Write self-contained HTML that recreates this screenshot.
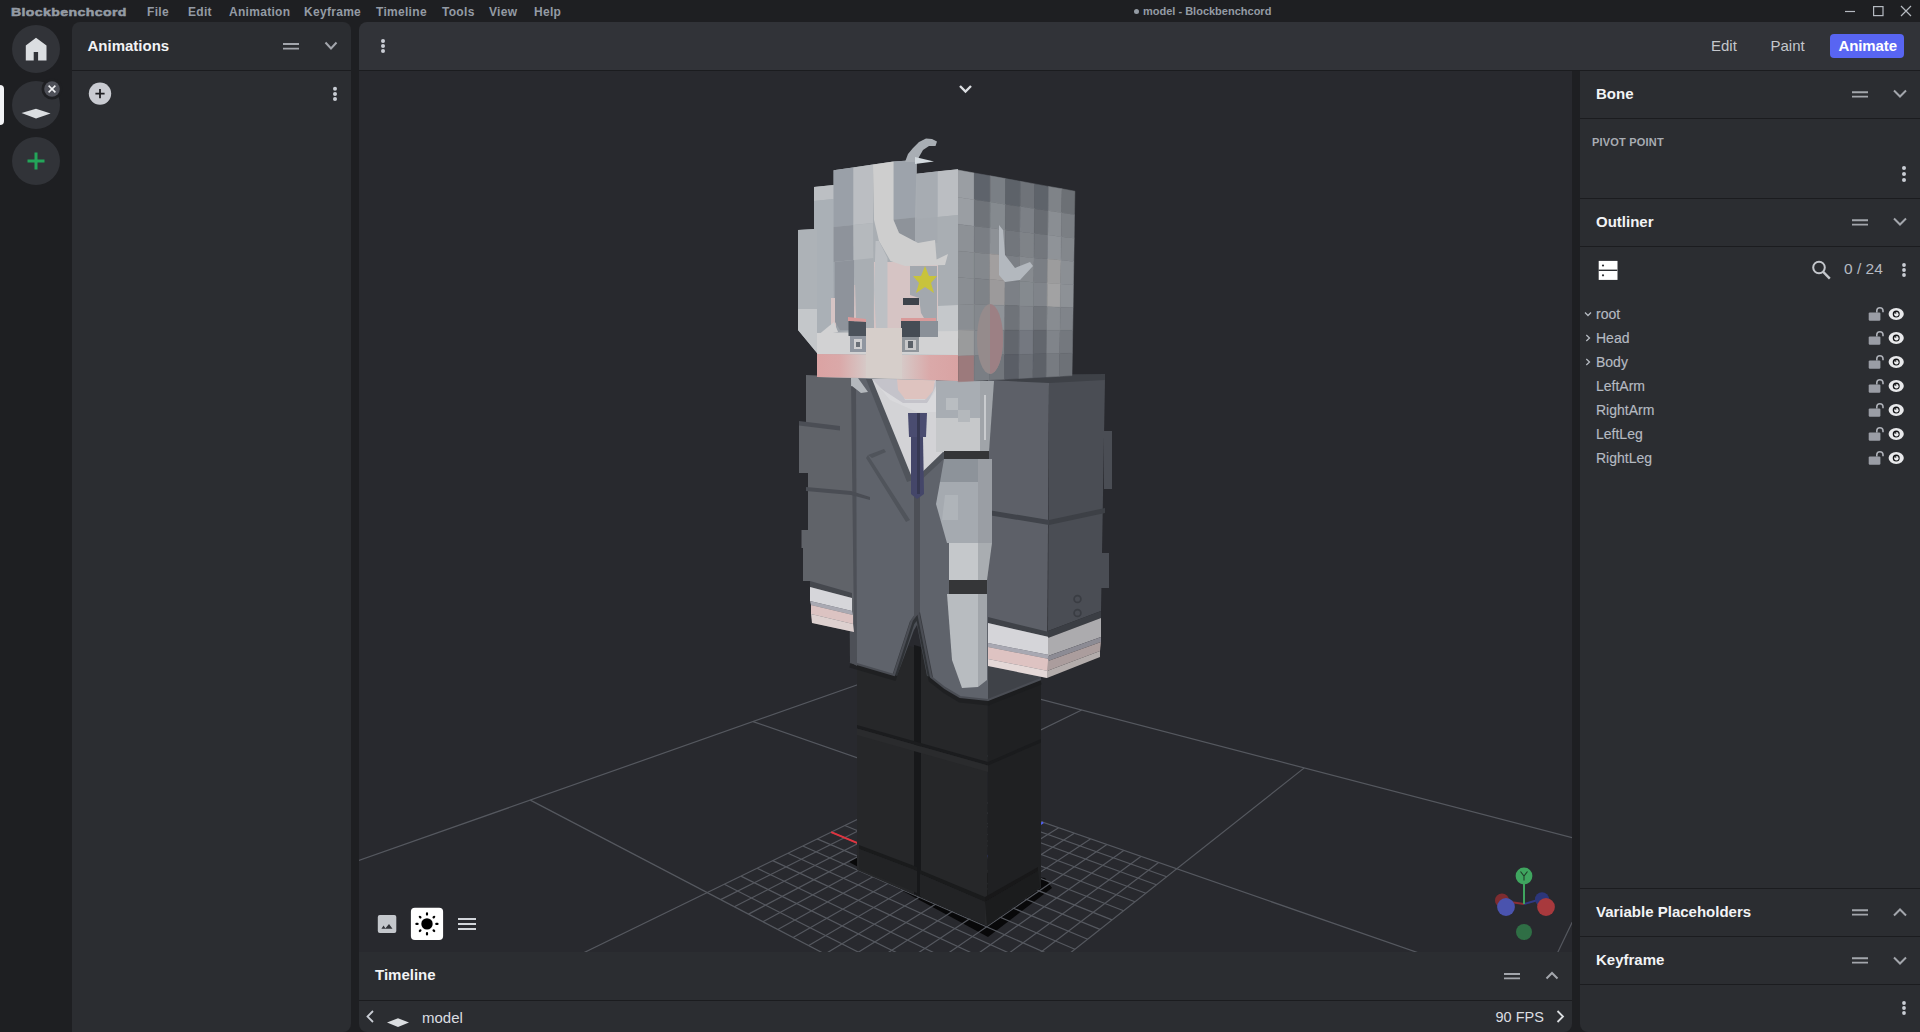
<!DOCTYPE html>
<html><head><meta charset="utf-8">
<style>
*{margin:0;padding:0;box-sizing:border-box}
html,body{width:1920px;height:1032px;overflow:hidden;background:#1e1f22;font-family:"Liberation Sans",sans-serif}
.a{position:absolute;white-space:nowrap}
.menu{top:6px;font-size:12px;line-height:12px;font-weight:bold;color:#949ba4;letter-spacing:0.3px}
.panel{background:#2b2d31}
.ht{font-size:15px;line-height:15px;font-weight:bold;color:#f2f3f5}
.hline{height:1px;background:#1b1c1f}
.olt{font-size:14px;line-height:14px;color:#b5bac1;-webkit-text-stroke:0.15px #b5bac1}
svg{overflow:visible}
</style></head><body>
<!-- title bar -->
<div class="a menu" style="left:10.5px;top:6.8px;font-size:11.2px;line-height:11px;letter-spacing:0.3px;transform:scaleX(1.26);transform-origin:0 0;-webkit-text-stroke:0.5px #949ba4">Blockbenchcord</div>
<div class="a menu" style="left:147px">File</div>
<div class="a menu" style="left:188px">Edit</div>
<div class="a menu" style="left:229px">Animation</div>
<div class="a menu" style="left:304px">Keyframe</div>
<div class="a menu" style="left:376px">Timeline</div>
<div class="a menu" style="left:442px">Tools</div>
<div class="a menu" style="left:489px">View</div>
<div class="a menu" style="left:534px">Help</div>
<div class="a" style="left:1134px;top:9px;width:5px;height:5px;border-radius:50%;background:#949ba4"></div>
<div class="a menu" style="left:1143px;top:5.5px;font-size:11px;line-height:11px;letter-spacing:0">model - Blockbenchcord</div>
<svg class="a" style="left:0;top:0" width="1920" height="22">
<line x1="1845" y1="11.5" x2="1855" y2="11.5" stroke="#b5bac1" stroke-width="1.2"/>
<rect x="1873.6" y="6.6" width="9.4" height="9" fill="none" stroke="#b5bac1" stroke-width="1.2"/>
<path d="M1901 6 L1911 16 M1911 6 L1901 16" stroke="#b5bac1" stroke-width="1.2"/>
</svg>

<!-- left rail -->
<div class="a" style="left:12px;top:25px;width:48px;height:48px;border-radius:50%;background:#313338"></div>
<div class="a" style="left:12px;top:81px;width:48px;height:48px;border-radius:50%;background:#313338"></div>
<div class="a" style="left:12px;top:137px;width:48px;height:48px;border-radius:50%;background:#313338"></div>
<div class="a" style="left:0;top:85px;width:4px;height:40px;border-radius:0 4px 4px 0;background:#f2f3f5"></div>
<svg class="a" style="left:0;top:0" width="72" height="200">
<path d="M36 37.8 L46.5 45.5 L46.5 60.5 L38.1 60.5 L38.1 52 L33.7 52 L33.7 60.5 L25.8 60.5 L25.8 45.5 Z" fill="#dbdee1"/>
<path d="M21.5 113 L36 108.7 L50.6 113.4 L36 118.6 Z" fill="#dbdee1"/>
<circle cx="52" cy="89" r="10.5" fill="#1e1f22"/>
<circle cx="52" cy="89" r="7.8" fill="#4e5058"/>
<path d="M48.6 85.6 L55.4 92.4 M55.4 85.6 L48.6 92.4" stroke="#f2f3f5" stroke-width="1.5"/>
<path d="M36 152.5 V169.5 M27.5 161 H44.5" stroke="#23a559" stroke-width="3"/>
</svg>

<!-- animations panel -->
<div class="a panel" style="left:72px;top:22px;width:279px;height:1010px;border-radius:8px 8px 8px 0"></div>
<div class="a hline" style="left:72px;top:70px;width:279px"></div>
<div class="a ht" style="left:87.5px;top:37.5px">Animations</div>
<svg class="a" style="left:0;top:0" width="360" height="120">
<path d="M283 44 H299 M283 48.6 H299" stroke="#a3a6ac" stroke-width="1.9"/>
<path d="M325.5 42.5 L331 48.5 L336.5 42.5" fill="none" stroke="#a3a6ac" stroke-width="2"/>
<circle cx="100" cy="93.6" r="11.2" fill="#c9cbd1"/>
<path d="M100 89 V98.2 M95.4 93.6 H104.6" stroke="#1e1f22" stroke-width="1.8"/>
<circle cx="335" cy="88.8" r="2" fill="#c9cdd4"/><circle cx="335" cy="93.9" r="2" fill="#c9cdd4"/><circle cx="335" cy="99" r="2" fill="#c9cdd4"/>
</svg>

<!-- center -->
<div class="a" style="left:359px;top:22px;width:1561px;height:48px;background:#313338;border-radius:8px 0 0 0"></div>
<div class="a" style="left:359px;top:70px;width:1561px;height:1px;background:#1b1c1f"></div>
<div class="a" style="left:359px;top:71px;width:1213px;height:881px;background:#28292e"></div>
<div class="a panel" style="left:359px;top:952px;width:1213px;height:80px;border-radius:0 0 8px 8px"></div>
<div class="a hline" style="left:359px;top:1000px;width:1213px"></div>
<div class="a ht" style="left:375px;top:967.4px">Timeline</div>
<div class="a" style="left:422px;top:1009.8px;font-size:15px;line-height:15px;color:#dbdee1">model</div>
<div class="a" style="left:1495.5px;top:1009.8px;font-size:14.5px;line-height:14.5px;color:#dbdee1">90 FPS</div>
<div class="a" style="left:1711px;top:38.4px;font-size:15px;line-height:15px;color:#c4c7cc">Edit</div>
<div class="a" style="left:1770.5px;top:38.4px;font-size:15px;line-height:15px;color:#c4c7cc">Paint</div>
<div class="a" style="left:1830px;top:34px;width:74px;height:24px;border-radius:4px;background:#5865f2"></div>
<div class="a" style="left:1838.5px;top:38.4px;font-size:15px;line-height:15px;font-weight:bold;color:#ffffff;letter-spacing:-0.1px">Animate</div>
<svg class="a" style="left:0;top:0" width="1920" height="1032">
<circle cx="383" cy="41" r="2" fill="#c9cdd4"/><circle cx="383" cy="46" r="2" fill="#c9cdd4"/><circle cx="383" cy="51" r="2" fill="#c9cdd4"/>
<!-- timeline icons -->
<path d="M1504 974 H1520 M1504 978.4 H1520" stroke="#a3a6ac" stroke-width="1.9"/>
<path d="M1546.5 978.5 L1552 973 L1557.5 978.5" fill="none" stroke="#a3a6ac" stroke-width="2"/>
<path d="M373 1011 L367.5 1016.5 L373 1022" fill="none" stroke="#c9cdd4" stroke-width="1.8"/>
<path d="M1557.5 1011 L1563 1016.5 L1557.5 1022" fill="none" stroke="#dbdee1" stroke-width="1.8"/>
<path d="M387 1022.5 L398 1018.3 L409 1022.5 L398 1027 Z" fill="#dbdee1"/>
</svg>

<svg class="a" style="left:0;top:0" width="1920" height="1032" viewBox="0 0 1920 1032"><defs><clipPath id="vp"><rect x="359" y="71" width="1213" height="881"/></clipPath></defs><g clip-path="url(#vp)">
<polygon points="849,862 988,937 1052,888 1045,878 857,856" fill="#080809"/>
<line x1="911.6" y1="665.7" x2="194.4" y2="918.5" stroke="#55585f" stroke-width="1.2" />
<line x1="911.6" y1="665.7" x2="1608.1" y2="847.0" stroke="#55585f" stroke-width="1.2" />
<line x1="1081.7" y1="710.0" x2="339.9" y2="1071.6" stroke="#55585f" stroke-width="1.2" />
<line x1="753.1" y1="721.6" x2="1537.7" y2="994.3" stroke="#55585f" stroke-width="1.2" />
<line x1="1304.3" y1="767.9" x2="588.8" y2="1333.6" stroke="#55585f" stroke-width="1.2" />
<line x1="530.3" y1="800.1" x2="1410.6" y2="1260.2" stroke="#55585f" stroke-width="1.2" />
<line x1="1608.1" y1="847.0" x2="1112.2" y2="1884.5" stroke="#55585f" stroke-width="1.2" />
<line x1="194.4" y1="918.5" x2="1112.2" y2="1884.5" stroke="#55585f" stroke-width="1.2" />
<line x1="944.0" y1="788.0" x2="720.6" y2="899.6" stroke="#55585f" stroke-width="1.2" />
<line x1="919.6" y1="789.0" x2="1166.7" y2="876.7" stroke="#55585f" stroke-width="1.2" />
<line x1="957.3" y1="792.6" x2="734.3" y2="906.8" stroke="#55585f" stroke-width="1.2" />
<line x1="907.9" y1="794.7" x2="1156.4" y2="884.8" stroke="#55585f" stroke-width="1.2" />
<line x1="970.9" y1="797.3" x2="748.5" y2="914.1" stroke="#55585f" stroke-width="1.2" />
<line x1="895.9" y1="800.5" x2="1145.8" y2="893.2" stroke="#55585f" stroke-width="1.2" />
<line x1="984.7" y1="802.1" x2="762.9" y2="921.7" stroke="#55585f" stroke-width="1.2" />
<line x1="883.7" y1="806.5" x2="1134.9" y2="901.8" stroke="#55585f" stroke-width="1.2" />
<line x1="998.9" y1="807.0" x2="777.8" y2="929.5" stroke="#55585f" stroke-width="1.2" />
<line x1="871.1" y1="812.7" x2="1123.6" y2="910.7" stroke="#55585f" stroke-width="1.2" />
<line x1="1013.3" y1="812.1" x2="793.1" y2="937.5" stroke="#55585f" stroke-width="1.2" />
<line x1="858.1" y1="819.0" x2="1112.0" y2="919.9" stroke="#55585f" stroke-width="1.2" />
<line x1="1028.1" y1="817.2" x2="808.7" y2="945.6" stroke="#55585f" stroke-width="1.2" />
<line x1="844.8" y1="825.5" x2="1100.0" y2="929.4" stroke="#55585f" stroke-width="1.2" />
<line x1="1043.2" y1="822.4" x2="824.9" y2="954.1" stroke="#55585f" stroke-width="1.2" />
<line x1="831.2" y1="832.1" x2="1087.7" y2="939.2" stroke="#55585f" stroke-width="1.2" />
<line x1="1058.6" y1="827.8" x2="841.4" y2="962.7" stroke="#55585f" stroke-width="1.2" />
<line x1="817.2" y1="838.9" x2="1074.9" y2="949.3" stroke="#55585f" stroke-width="1.2" />
<line x1="1074.3" y1="833.3" x2="858.5" y2="971.6" stroke="#55585f" stroke-width="1.2" />
<line x1="802.8" y1="846.0" x2="1061.6" y2="959.8" stroke="#55585f" stroke-width="1.2" />
<line x1="1090.4" y1="838.9" x2="876.0" y2="980.8" stroke="#55585f" stroke-width="1.2" />
<line x1="788.0" y1="853.2" x2="1047.9" y2="970.6" stroke="#55585f" stroke-width="1.2" />
<line x1="1106.9" y1="844.6" x2="894.0" y2="990.2" stroke="#55585f" stroke-width="1.2" />
<line x1="772.7" y1="860.6" x2="1033.8" y2="981.8" stroke="#55585f" stroke-width="1.2" />
<line x1="1123.7" y1="850.4" x2="912.6" y2="999.9" stroke="#55585f" stroke-width="1.2" />
<line x1="757.1" y1="868.2" x2="1019.1" y2="993.4" stroke="#55585f" stroke-width="1.2" />
<line x1="1140.9" y1="856.4" x2="931.7" y2="1009.9" stroke="#55585f" stroke-width="1.2" />
<line x1="740.9" y1="876.1" x2="1003.9" y2="1005.4" stroke="#55585f" stroke-width="1.2" />
<line x1="1158.6" y1="862.6" x2="951.4" y2="1020.2" stroke="#55585f" stroke-width="1.2" />
<line x1="724.3" y1="884.2" x2="988.1" y2="1017.9" stroke="#55585f" stroke-width="1.2" />
<line x1="947.0" y1="880.4" x2="831.2" y2="832.1" stroke="#e0343f" stroke-width="2" />
<line x1="947.0" y1="880.4" x2="1043.2" y2="822.4" stroke="#4f5ff0" stroke-width="2" />
<polygon points="857.0,633.0 988.0,666.0 987.0,926.0 857.0,870.0" fill="#262729" />
<polygon points="988.0,666.0 1041.0,645.0 1041.0,888.0 987.0,926.0" fill="#1f2022" />
<polygon points="914.0,645.0 921.0,647.0 921.0,897.0 914.0,894.0" fill="#17181a" />
<polygon points="857.0,725.0 988.0,762.0 988.0,765.5 857.0,728.5" fill="#1b1c1e" />
<polygon points="988.0,762.0 1041.0,739.0 1041.0,742.5 988.0,765.5" fill="#1a1b1d" />
<polygon points="857.0,728.5 988.0,765.5 988.0,772.0 857.0,735.0" fill="#2a2b2d" />
<polygon points="859.0,845.0 917.0,867.0 917.0,871.0 859.0,849.0" fill="#1a1b1c" />
<polygon points="920.0,870.0 985.0,897.0 985.0,902.0 920.0,874.0" fill="#1a1b1c" />
<polygon points="985.0,897.0 1038.0,867.0 1038.0,871.0 985.0,902.0" fill="#181819" />
<polygon points="859.0,849.0 917.0,871.0 917.0,893.0 859.0,869.0" fill="#222325" />
<polygon points="920.0,874.0 985.0,902.0 985.0,925.0 920.0,896.0" fill="#222325" />
<polygon points="985.0,902.0 1038.0,871.0 1040.0,887.0 987.0,925.0" fill="#1b1c1d" />
<polygon points="987.0,640.0 1041.0,618.0 1041.0,679.0 987.0,701.0" fill="#3f4248" />
<polygon points="849.0,377.0 988.0,381.0 988.0,700.0 960.0,697.0 945.0,688.0 931.0,677.0 918.0,612.0 912.0,620.0 894.0,675.0 850.0,662.0" fill="#5f636b" />
<polygon points="912.0,620.0 918.0,612.0 931.0,677.0 927.0,676.0 917.0,625.0 914.0,630.0 897.0,676.0 894.0,675.0" fill="#4b4f56" />
<polyline points="850,662 894,675 912,620 918,612 931,677 945,688 960,697 988,700 1041,679" fill="none" stroke="#1a1b1d" stroke-width="5" stroke-opacity="0.55" transform="translate(0,3)"/>
<polyline points="850,662 894,675 912,620 918,612 931,677 945,688 960,697 988,700 1041,679" fill="none" stroke="#4a4d54" stroke-width="2.2"/>
<polygon points="914.0,478.0 920.0,478.0 920.0,612.0 914.0,618.0" fill="#4c4f56" />
<polygon points="849.0,377.0 856.0,377.0 857.0,666.0 850.0,662.0" fill="#4d5057" />
<polygon points="870.0,379.0 936.0,380.0 943.0,454.0 917.0,479.0 912.0,479.0" fill="#d3d3d6" />
<polygon points="872.0,379.0 897.0,379.0 905.0,400.0 925.0,400.0 936.0,380.0 936.0,386.0 927.0,404.0 905.0,405.0 885.0,392.0" fill="#c4c3ca" />
<polygon points="880.0,388.0 903.0,403.0 927.0,403.0 936.0,390.0 936.0,412.0 917.0,412.0 890.0,400.0" fill="#d9d9dc" />
<polygon points="843.0,378.0 858.0,378.0 868.0,392.0 861.0,393.0 852.0,386.0 846.0,388.0" fill="#b4b8bd" />
<polygon points="897.0,379.0 935.0,380.0 933.0,391.0 926.0,399.0 905.0,399.0 898.0,390.0" fill="#dec3bf" />
<polygon points="866.0,379.0 872.0,379.0 913.0,480.0 907.0,482.0" fill="#50545b" />
<polygon points="943.0,452.0 947.0,456.0 919.0,482.0 915.0,479.0" fill="#50545b" />
<polygon points="868.0,455.0 884.0,449.0 886.0,452.0 872.0,458.0" fill="#50545b" />
<polygon points="868.0,455.0 910.0,520.0 906.0,522.0 866.0,458.0" fill="#50545b" />
<polygon points="908.0,413.0 927.0,413.0 926.0,437.0 909.0,437.0" fill="#4a4c70" />
<polygon points="911.0,437.0 923.0,437.0 924.0,494.0 917.0,499.0 911.0,494.0" fill="#444669" />
<polygon points="917.0,413.0 920.0,413.0 920.0,494.0 917.0,494.0" fill="#363852" />
<polygon points="806.0,375.0 851.0,377.0 854.0,632.0 813.0,623.0 810.0,581.0 803.0,581.0 803.0,548.0 801.5,548.0 801.5,530.0 808.0,530.0 808.0,473.0 799.0,473.0 799.0,422.0 806.0,422.0" fill="#606369" />
<polygon points="806.0,487.0 851.0,491.0 870.0,497.0 870.0,500.0 851.0,495.0 806.0,491.0" fill="#4a4d54" />
<polygon points="799.0,421.0 840.0,426.0 840.0,430.5 799.0,425.5" fill="#4b4e55" />
<polygon points="810.0,581.0 852.0,593.0 852.0,598.0 810.0,587.0" fill="#45484e" />
<polygon points="810.0,587.0 852.0,598.0 852.0,611.0 810.0,601.0" fill="#d6d6da" />
<polygon points="810.0,601.0 852.0,611.0 853.0,615.0 811.0,605.0" fill="#a9a9b2" />
<polygon points="811.0,605.0 853.0,615.0 853.0,624.0 811.0,614.0" fill="#dcc3c2" />
<polygon points="811.0,614.0 853.0,624.0 854.0,632.0 812.0,623.0" fill="#ddd0cf" />
<polygon points="988.0,379.0 1049.0,381.0 1047.0,678.0 988.0,666.0" fill="#5d6068" />
<polygon points="1049.0,381.0 1105.0,379.0 1101.0,611.0 1048.0,631.0" fill="#4a4d54" />
<polygon points="1104.0,431.0 1112.0,431.0 1112.0,489.0 1104.0,489.0" fill="#4a4d54" />
<polygon points="1100.0,553.0 1109.0,553.0 1109.0,588.0 1100.0,588.0" fill="#4a4d54" />
<polygon points="988.0,375.0 1105.0,374.0 1105.0,380.0 1049.0,383.0 988.0,380.0" fill="#3e4147" />
<polygon points="988.0,510.0 1049.0,520.0 1049.0,525.0 988.0,515.0" fill="#40434a" />
<polygon points="1049.0,520.0 1105.0,508.0 1105.0,513.0 1049.0,525.0" fill="#3d4046" />
<circle cx="1077.5" cy="599" r="3.4" fill="none" stroke="#3a3d43" stroke-width="1.7"/>
<circle cx="1077.5" cy="613" r="3.4" fill="none" stroke="#3a3d43" stroke-width="1.7"/>
<polygon points="988.0,617.0 1049.0,632.0 1049.0,637.0 988.0,623.0" fill="#3f4248" />
<polygon points="988.0,623.0 1049.0,637.0 1049.0,655.0 988.0,643.0" fill="#d5d5d9" />
<polygon points="988.0,643.0 1049.0,655.0 1049.0,659.0 988.0,647.0" fill="#a8a8b2" />
<polygon points="988.0,647.0 1049.0,659.0 1048.0,671.0 988.0,659.0" fill="#dec3c2" />
<polygon points="988.0,659.0 1048.0,671.0 1047.0,678.0 988.0,666.0" fill="#e4d8d7" />
<polygon points="1048.0,631.0 1101.0,611.0 1101.0,618.0 1048.0,638.0" fill="#3b3e44" />
<polygon points="1048.0,638.0 1101.0,618.0 1101.0,637.0 1048.0,656.0" fill="#acabae" />
<polygon points="1048.0,656.0 1101.0,637.0 1101.0,642.0 1048.0,661.0" fill="#8c8b94" />
<polygon points="1048.0,661.0 1101.0,642.0 1100.0,651.0 1047.0,671.0" fill="#ab9d9d" />
<polygon points="1047.0,671.0 1100.0,651.0 1100.0,657.0 1047.0,678.0" fill="#b3acab" />
<polygon points="936.0,381.0 980.0,381.0 980.0,418.0 936.0,418.0" fill="#a8adb3" />
<polygon points="936.0,418.0 980.0,418.0 980.0,452.0 936.0,452.0" fill="#c6c8ca" />
<polygon points="946.0,398.0 958.0,398.0 958.0,410.0 946.0,410.0" fill="#b9bdc1" />
<polygon points="958.0,410.0 970.0,410.0 970.0,422.0 958.0,422.0" fill="#b4b8bc" />
<polygon points="980.0,381.0 994.0,381.0 989.0,452.0 980.0,452.0" fill="#a0a4a9" />
<polygon points="984.0,395.0 986.0,395.0 986.0,440.0 984.0,440.0" fill="#c9cbce" />
<polygon points="944.0,459.0 978.0,459.0 978.0,482.0 940.0,482.0" fill="#8d939a" />
<polygon points="940.0,482.0 978.0,482.0 978.0,543.0 947.0,543.0 936.0,504.0" fill="#a5aab0" />
<polygon points="978.0,459.0 992.0,459.0 992.0,543.0 978.0,543.0" fill="#9a9ea4" />
<polygon points="945.0,495.0 958.0,495.0 958.0,520.0 942.0,520.0" fill="#afb4b9" />
<polygon points="949.0,543.0 978.0,543.0 978.0,580.0 949.0,580.0" fill="#c5c8cb" />
<polygon points="978.0,543.0 992.0,543.0 987.0,580.0 978.0,580.0" fill="#a9adb1" />
<polygon points="947.0,594.0 978.0,594.0 978.0,687.0 962.0,688.0 952.0,660.0" fill="#b8bcc0" />
<polygon points="978.0,594.0 987.0,594.0 987.0,680.0 978.0,687.0" fill="#a2a6ab" />
<polygon points="944.0,451.0 989.0,451.0 989.0,459.0 944.0,459.0" fill="#343537" />
<polygon points="949.0,580.0 987.0,580.0 987.0,594.0 949.0,594.0" fill="#353638" />
<polygon points="957.8,170.0 974.3,173.0 974.3,199.7 957.8,197.2" fill="#9a9ea3" stroke="#9a9ea3" stroke-width="0.5"/>
<polygon points="974.3,173.0 990.2,175.8 990.2,202.1 974.3,199.7" fill="#5e636b" stroke="#5e636b" stroke-width="0.5"/>
<polygon points="990.2,175.8 1005.6,178.6 1005.5,204.4 990.2,202.1" fill="#7a7f85" stroke="#7a7f85" stroke-width="0.5"/>
<polygon points="1005.6,178.6 1020.4,181.3 1020.2,206.6 1005.5,204.4" fill="#5d6269" stroke="#5d6269" stroke-width="0.5"/>
<polygon points="1020.4,181.3 1034.7,183.9 1034.5,208.7 1020.2,206.6" fill="#6f7379" stroke="#6f7379" stroke-width="0.5"/>
<polygon points="1034.7,183.9 1048.6,186.4 1048.3,210.8 1034.5,208.7" fill="#5e636a" stroke="#5e636a" stroke-width="0.5"/>
<polygon points="1048.6,186.4 1062.0,188.8 1061.6,212.8 1048.3,210.8" fill="#7f8388" stroke="#7f8388" stroke-width="0.5"/>
<polygon points="1062.0,188.8 1074.9,191.2 1074.5,214.8 1061.6,212.8" fill="#6c7075" stroke="#6c7075" stroke-width="0.5"/>
<polygon points="957.8,197.2 974.3,199.7 974.3,226.2 957.9,224.2" fill="#9a9ea3" stroke="#9a9ea3" stroke-width="0.5"/>
<polygon points="974.3,199.7 990.2,202.1 990.1,228.1 974.3,226.2" fill="#6f7379" stroke="#6f7379" stroke-width="0.5"/>
<polygon points="990.2,202.1 1005.5,204.4 1005.3,229.9 990.1,228.1" fill="#858a8f" stroke="#858a8f" stroke-width="0.5"/>
<polygon points="1005.5,204.4 1020.2,206.6 1020.0,231.7 1005.3,229.9" fill="#6a6e74" stroke="#6a6e74" stroke-width="0.5"/>
<polygon points="1020.2,206.6 1034.5,208.7 1034.3,233.4 1020.0,231.7" fill="#7c8086" stroke="#7c8086" stroke-width="0.5"/>
<polygon points="1034.5,208.7 1048.3,210.8 1048.0,235.1 1034.3,233.4" fill="#686c72" stroke="#686c72" stroke-width="0.5"/>
<polygon points="1048.3,210.8 1061.6,212.8 1061.3,236.7 1048.0,235.1" fill="#8a8e93" stroke="#8a8e93" stroke-width="0.5"/>
<polygon points="1061.6,212.8 1074.5,214.8 1074.2,238.2 1061.3,236.7" fill="#7b7f84" stroke="#7b7f84" stroke-width="0.5"/>
<polygon points="957.9,224.2 974.3,226.2 974.2,252.5 957.9,251.0" fill="#8d9196" stroke="#8d9196" stroke-width="0.5"/>
<polygon points="974.3,226.2 990.1,228.1 990.0,253.9 974.2,252.5" fill="#7a7e84" stroke="#7a7e84" stroke-width="0.5"/>
<polygon points="990.1,228.1 1005.3,229.9 1005.2,255.3 990.0,253.9" fill="#8d9196" stroke="#8d9196" stroke-width="0.5"/>
<polygon points="1005.3,229.9 1020.0,231.7 1019.9,256.6 1005.2,255.3" fill="#72767c" stroke="#72767c" stroke-width="0.5"/>
<polygon points="1020.0,231.7 1034.3,233.4 1034.0,257.9 1019.9,256.6" fill="#7f8388" stroke="#7f8388" stroke-width="0.5"/>
<polygon points="1034.3,233.4 1048.0,235.1 1047.7,259.1 1034.0,257.9" fill="#73777d" stroke="#73777d" stroke-width="0.5"/>
<polygon points="1048.0,235.1 1061.3,236.7 1061.0,260.3 1047.7,259.1" fill="#8f9398" stroke="#8f9398" stroke-width="0.5"/>
<polygon points="1061.3,236.7 1074.2,238.2 1073.8,261.5 1061.0,260.3" fill="#83878c" stroke="#83878c" stroke-width="0.5"/>
<polygon points="957.9,251.0 974.2,252.5 974.2,278.6 958.0,277.6" fill="#8a8e93" stroke="#8a8e93" stroke-width="0.5"/>
<polygon points="974.2,252.5 990.0,253.9 989.9,279.5 974.2,278.6" fill="#84888d" stroke="#84888d" stroke-width="0.5"/>
<polygon points="990.0,253.9 1005.2,255.3 1005.0,280.5 989.9,279.5" fill="#a29f9f" stroke="#a29f9f" stroke-width="0.5"/>
<polygon points="1005.2,255.3 1019.9,256.6 1019.7,281.3 1005.0,280.5" fill="#7b7f85" stroke="#7b7f85" stroke-width="0.5"/>
<polygon points="1019.9,256.6 1034.0,257.9 1033.8,282.2 1019.7,281.3" fill="#868a8f" stroke="#868a8f" stroke-width="0.5"/>
<polygon points="1034.0,257.9 1047.7,259.1 1047.4,283.0 1033.8,282.2" fill="#7a7e84" stroke="#7a7e84" stroke-width="0.5"/>
<polygon points="1047.7,259.1 1061.0,260.3 1060.6,283.9 1047.4,283.0" fill="#9c9c9d" stroke="#9c9c9d" stroke-width="0.5"/>
<polygon points="1061.0,260.3 1073.8,261.5 1073.4,284.6 1060.6,283.9" fill="#8b8f94" stroke="#8b8f94" stroke-width="0.5"/>
<polygon points="958.0,277.6 974.2,278.6 974.2,304.5 958.0,304.0" fill="#8a8e93" stroke="#8a8e93" stroke-width="0.5"/>
<polygon points="974.2,278.6 989.9,279.5 989.8,305.0 974.2,304.5" fill="#7f8388" stroke="#7f8388" stroke-width="0.5"/>
<polygon points="989.9,279.5 1005.0,280.5 1004.9,305.4 989.8,305.0" fill="#9c9a9b" stroke="#9c9a9b" stroke-width="0.5"/>
<polygon points="1005.0,280.5 1019.7,281.3 1019.5,305.9 1004.9,305.4" fill="#7c8086" stroke="#7c8086" stroke-width="0.5"/>
<polygon points="1019.7,281.3 1033.8,282.2 1033.6,306.3 1019.5,305.9" fill="#858a8f" stroke="#858a8f" stroke-width="0.5"/>
<polygon points="1033.8,282.2 1047.4,283.0 1047.2,306.8 1033.6,306.3" fill="#80848a" stroke="#80848a" stroke-width="0.5"/>
<polygon points="1047.4,283.0 1060.6,283.9 1060.3,307.2 1047.2,306.8" fill="#a2a2a3" stroke="#a2a2a3" stroke-width="0.5"/>
<polygon points="1060.6,283.9 1073.4,284.6 1073.1,307.6 1060.3,307.2" fill="#8d9196" stroke="#8d9196" stroke-width="0.5"/>
<polygon points="958.0,304.0 974.2,304.5 974.2,330.2 958.0,330.1" fill="#8a8e93" stroke="#8a8e93" stroke-width="0.5"/>
<polygon points="974.2,304.5 989.8,305.0 989.7,330.2 974.2,330.2" fill="#84888d" stroke="#84888d" stroke-width="0.5"/>
<polygon points="989.8,305.0 1004.9,305.4 1004.8,330.2 989.7,330.2" fill="#8f9398" stroke="#8f9398" stroke-width="0.5"/>
<polygon points="1004.9,305.4 1019.5,305.9 1019.3,330.3 1004.8,330.2" fill="#6f7379" stroke="#6f7379" stroke-width="0.5"/>
<polygon points="1019.5,305.9 1033.6,306.3 1033.3,330.3 1019.3,330.3" fill="#80848a" stroke="#80848a" stroke-width="0.5"/>
<polygon points="1033.6,306.3 1047.2,306.8 1046.9,330.3 1033.3,330.3" fill="#71757b" stroke="#71757b" stroke-width="0.5"/>
<polygon points="1047.2,306.8 1060.3,307.2 1060.0,330.4 1046.9,330.3" fill="#888c91" stroke="#888c91" stroke-width="0.5"/>
<polygon points="1060.3,307.2 1073.1,307.6 1072.7,330.4 1060.0,330.4" fill="#80848a" stroke="#80848a" stroke-width="0.5"/>
<polygon points="958.0,330.1 974.2,330.2 974.2,355.7 958.1,356.1" fill="#9a9b9c" stroke="#9a9b9c" stroke-width="0.5"/>
<polygon points="974.2,330.2 989.7,330.2 989.7,355.2 974.2,355.7" fill="#878b90" stroke="#878b90" stroke-width="0.5"/>
<polygon points="989.7,330.2 1004.8,330.2 1004.6,354.8 989.7,355.2" fill="#7e8287" stroke="#7e8287" stroke-width="0.5"/>
<polygon points="1004.8,330.2 1019.3,330.3 1019.1,354.5 1004.6,354.8" fill="#62666d" stroke="#62666d" stroke-width="0.5"/>
<polygon points="1019.3,330.3 1033.3,330.3 1033.1,354.1 1019.1,354.5" fill="#747880" stroke="#747880" stroke-width="0.5"/>
<polygon points="1033.3,330.3 1046.9,330.3 1046.6,353.7 1033.1,354.1" fill="#62666d" stroke="#62666d" stroke-width="0.5"/>
<polygon points="1046.9,330.3 1060.0,330.4 1059.7,353.4 1046.6,353.7" fill="#80848a" stroke="#80848a" stroke-width="0.5"/>
<polygon points="1060.0,330.4 1072.7,330.4 1072.4,353.1 1059.7,353.4" fill="#74787e" stroke="#74787e" stroke-width="0.5"/>
<polygon points="958.1,356.1 974.2,355.7 974.1,381.0 958.1,381.8" fill="#9c7a7c" stroke="#9c7a7c" stroke-width="0.5"/>
<polygon points="974.2,355.7 989.7,355.2 989.6,380.1 974.1,381.0" fill="#7a7e84" stroke="#7a7e84" stroke-width="0.5"/>
<polygon points="989.7,355.2 1004.6,354.8 1004.5,379.3 989.6,380.1" fill="#72767c" stroke="#72767c" stroke-width="0.5"/>
<polygon points="1004.6,354.8 1019.1,354.5 1018.9,378.5 1004.5,379.3" fill="#5a5e66" stroke="#5a5e66" stroke-width="0.5"/>
<polygon points="1019.1,354.5 1033.1,354.1 1032.9,377.7 1018.9,378.5" fill="#6b6f76" stroke="#6b6f76" stroke-width="0.5"/>
<polygon points="1033.1,354.1 1046.6,353.7 1046.3,377.0 1032.9,377.7" fill="#5d6168" stroke="#5d6168" stroke-width="0.5"/>
<polygon points="1046.6,353.7 1059.7,353.4 1059.4,376.3 1046.3,377.0" fill="#777b81" stroke="#777b81" stroke-width="0.5"/>
<polygon points="1059.7,353.4 1072.4,353.1 1072.0,375.6 1059.4,376.3" fill="#6d7177" stroke="#6d7177" stroke-width="0.5"/>
<ellipse cx="990" cy="339" rx="13" ry="35" fill="#958b8c"/>
<path d="M990 304 A13 35 0 0 1 990 374 Z" fill="#9c8084"/>
<polygon points="999.0,225.0 1003.0,230.0 1005.0,255.0 1015.0,268.0 1030.0,262.0 1033.0,266.0 1020.0,280.0 1005.0,282.0 999.0,275.0" fill="#b3b8be" />
<polygon points="814.0,187.0 833.6,185.0 833.6,170.3 893.5,161.6 916.7,160.0 916.7,173.8 958.0,169.2 958.0,381.0 817.0,377.0 817.0,353.0 798.0,330.0 798.0,230.0 814.0,229.0" fill="#a9aeb3" />
<polygon points="814.0,187.0 833.6,185.0 833.6,199.0 814.0,201.0" fill="#bcbfc3" />
<polygon points="814.0,201.0 833.6,199.0 834.0,335.0 817.0,335.0" fill="#aab0b6" />
<polygon points="798.0,230.0 817.0,229.0 817.0,309.0 798.0,309.0" fill="#adb2b7" />
<polygon points="798.0,309.0 817.0,309.0 817.0,353.0 798.0,330.0" fill="#c4c7ca" />
<polygon points="833.6,170.3 853.4,167.4 853.4,225.0 833.6,227.0" fill="#9aa0a8" />
<polygon points="833.6,227.0 853.4,225.0 853.4,260.0 833.6,262.0" fill="#8e939b" />
<polygon points="833.6,262.0 853.4,260.0 854.0,330.0 838.0,332.0 834.0,322.0" fill="#9ba1a8" />
<polygon points="853.4,167.4 873.0,164.5 873.0,223.0 853.4,225.0" fill="#bbbec2" />
<polygon points="853.4,225.0 873.0,223.0 874.0,320.0 860.0,326.0 854.0,320.0" fill="#b5b9bd" />
<polygon points="893.5,219.8 915.0,217.4 915.0,241.0 893.5,241.0" fill="#9ea4aa" />
<polygon points="893.5,161.6 916.7,160.0 915.0,217.4 893.5,219.8" fill="#9da3ab" />
<polygon points="915.0,217.4 937.7,217.0 937.7,243.0 915.0,243.0" fill="#a5aab0" />
<polygon points="893.5,219.8 915.0,217.4 915.0,241.0 906.0,241.0 899.0,233.0" fill="#8e939a" />
<polygon points="916.7,173.8 937.7,171.3 937.7,217.0 916.7,219.0" fill="#a7acb2" />
<polygon points="937.7,171.3 958.0,169.2 958.0,215.0 937.7,217.0" fill="#bbbec2" />
<polygon points="937.7,217.0 958.0,215.0 958.0,305.0 937.7,306.0" fill="#a9aeb3" />
<polygon points="937.7,306.0 958.0,305.0 958.0,354.0 937.7,354.0" fill="#c5c8cb" />
<polygon points="874.0,262.0 938.0,262.0 938.0,330.0 874.0,330.0" fill="#d6c4c4" />
<polygon points="852.0,285.0 856.0,285.0 856.0,330.0 852.0,330.0" fill="#d6c4c4" />
<polygon points="831.0,298.0 836.0,298.0 836.0,330.0 831.0,330.0" fill="#d6c4c4" />
<polygon points="873.0,164.5 893.5,161.6 893.5,220.0 899.0,233.0 918.0,243.0 935.0,240.0 936.6,259.5 948.0,254.0 945.0,265.0 905.0,266.0 890.5,261.0 879.0,241.0 874.0,220.0" fill="#cecece" />
<polygon points="835.0,262.0 854.4,260.0 854.0,322.0 850.0,330.0 840.0,330.0 835.0,322.0" fill="#8e939b" />
<polygon points="854.4,260.0 873.6,258.0 873.6,326.0 862.0,326.0 856.0,318.0" fill="#a9aeb3" />
<polygon points="875.6,241.0 879.0,241.0 887.5,258.0 887.5,328.0 876.0,328.0 874.0,290.0" fill="#bdc0c4" />
<polygon points="910.0,266.0 937.0,266.0 937.0,330.0 933.0,333.0 929.0,318.0 924.0,318.0 921.0,313.0 919.0,298.0 910.0,295.0" fill="#a3a8ae" />
<polygon points="817.0,333.0 958.0,331.0 958.0,355.0 817.0,354.0" fill="#d2d2d3" />
<polygon points="834.0,322.0 838.0,332.0 817.0,336.0" fill="#d2d2d3" />
<polygon points="848.0,317.0 866.0,319.0 866.0,322.0 848.0,321.0" fill="#d99a9a" />
<polygon points="848.5,321.0 866.0,322.0 866.0,336.0 848.5,336.0" fill="#4b525b" />
<polygon points="850.0,336.0 866.0,336.0 866.0,352.0 850.0,352.0" fill="#9096a0" />
<polygon points="854.0,339.0 862.0,339.0 862.0,349.0 854.0,349.0" fill="#cfcfd1" />
<polygon points="856.0,342.0 860.0,342.0 860.0,347.0 856.0,347.0" fill="#6a7078" />
<polygon points="901.0,318.0 936.0,318.0 936.0,321.0 901.0,321.0" fill="#d99a9a" />
<polygon points="901.0,321.0 920.0,321.0 920.0,337.0 901.0,337.0" fill="#454c55" />
<polygon points="920.0,321.0 938.0,321.0 938.0,337.0 920.0,337.0" fill="#8a9098" />
<polygon points="902.0,337.0 919.0,337.0 919.0,352.0 902.0,352.0" fill="#8f949a" />
<polygon points="905.0,340.0 916.0,340.0 916.0,350.0 905.0,350.0" fill="#c8c8ca" />
<polygon points="908.0,341.0 913.0,341.0 913.0,348.0 908.0,348.0" fill="#5a6068" />
<polygon points="903.0,298.0 919.0,298.0 919.0,305.0 903.0,305.0" fill="#3d434b" />
<defs><linearGradient id="blL" x1="0" x2="1" y1="0" y2="0"><stop offset="0" stop-color="#dba3a3"/><stop offset="0.45" stop-color="#daa8a8"/><stop offset="1" stop-color="#d6c9c7"/></linearGradient><linearGradient id="blR" x1="0" x2="1" y1="0" y2="0"><stop offset="0" stop-color="#d6c9c7"/><stop offset="0.5" stop-color="#daa9a9"/><stop offset="1" stop-color="#d9a3a3"/></linearGradient></defs>
<polygon points="817.0,354.0 866.0,354.5 866.0,378.0 817.0,377.0" fill="url(#blL)" />
<polygon points="866.0,354.5 902.0,355.0 902.0,379.0 866.0,378.0" fill="#d6ceca" />
<polygon points="902.0,355.0 958.0,355.0 958.0,381.0 902.0,379.0" fill="url(#blR)" />
<polygon points="866.0,328.0 902.0,328.0 902.0,356.0 866.0,356.0" fill="#d6ceca" />
<polygon points="925.0,266.0 929.0,276.0 937.0,276.0 931.0,283.0 934.0,293.0 925.0,287.0 916.0,293.0 919.0,283.0 913.0,276.0 921.0,276.0" fill="#c8c33c" />
<polygon points="905.0,162.0 908.0,154.0 913.0,148.0 919.0,142.0 926.0,138.5 932.0,139.0 937.0,141.5 935.5,146.0 929.0,146.0 923.0,150.0 919.0,157.0 917.0,162.0" fill="#a9aeb4" />
<polygon points="915.0,157.0 934.0,161.5 915.0,164.0" fill="#d3d9de" />
</g>
<!-- viewport overlays -->
<path d="M960 86 L965.5 91.5 L971 86" fill="none" stroke="#dcdee2" stroke-width="2.4"/>
<rect x="377.8" y="914.9" width="18.5" height="18.1" rx="2" fill="#c4c7cc"/>
<path d="M381.4 928.8 L383.6 925.6 L385.6 928.8 Z M385 928.8 L389 924 L392.5 928.8 Z" fill="#313338"/>
<rect x="410.9" y="907.8" width="32.2" height="32.2" rx="4" fill="#ffffff"/>
<circle cx="427" cy="923.9" r="5.7" fill="#000"/>
<g stroke="#000" stroke-width="2.2" stroke-linecap="round">
<path d="M427 913.4 V914.6 M427 933.2 V934.4 M416.4 923.9 H417.6 M436.3 923.9 H437.5 M419.8 916.8 L420.4 917.4 M433.6 930.4 L434.2 931 M434.2 916.8 L433.6 917.4 M420.4 930.4 L419.8 931"/>
</g>
<path d="M458 919 H476 M458 924 H476 M458 929 H476" stroke="#d2d5da" stroke-width="2"/>
<!-- gizmo -->
<line x1="1524" y1="904" x2="1510" y2="902" stroke="#8b2f33" stroke-width="2"/>
<line x1="1524" y1="904" x2="1538" y2="900" stroke="#2f3a85" stroke-width="2"/>
<circle cx="1502" cy="900.5" r="7" fill="#7e2c30"/>
<circle cx="1542" cy="899.2" r="7" fill="#2c367a"/>
<line x1="1524" y1="904" x2="1524" y2="876" stroke="#3fa55f" stroke-width="2"/>
<circle cx="1524" cy="876" r="8.4" fill="#3fa55f"/>
<path d="M1520.5 871.5 L1524 876 L1527.5 871.5 M1524 876 V880.5" fill="none" stroke="#20402a" stroke-width="1.1"/>
<circle cx="1524" cy="932" r="8" fill="#2f6e45"/>
<circle cx="1506" cy="907" r="8.9" fill="#4a53ae"/>
<circle cx="1546" cy="907" r="8.9" fill="#a8393d"/>
</svg>

<!-- right panel -->
<div class="a panel" style="left:1580px;top:71px;width:340px;height:961px;border-radius:0 0 0 8px"></div>
<div class="a hline" style="left:1580px;top:118px;width:340px"></div>
<div class="a hline" style="left:1580px;top:198px;width:340px"></div>
<div class="a hline" style="left:1580px;top:246px;width:340px"></div>
<div class="a hline" style="left:1580px;top:888px;width:340px"></div>
<div class="a hline" style="left:1580px;top:936px;width:340px"></div>
<div class="a hline" style="left:1580px;top:984px;width:340px"></div>
<div class="a ht" style="left:1596px;top:85.5px">Bone</div>
<div class="a" style="left:1592px;top:136.7px;font-size:11px;line-height:11px;font-weight:bold;color:#a8acb3;letter-spacing:0.2px">PIVOT POINT</div>
<div class="a ht" style="left:1596px;top:213.7px">Outliner</div>
<div class="a" style="left:1844px;top:261.1px;font-size:15.5px;line-height:15.5px;color:#b5bac1">0 / 24</div>
<div class="a olt" style="left:1596px;top:307.4px">root</div>
<div class="a olt" style="left:1596px;top:331.4px">Head</div>
<div class="a olt" style="left:1596px;top:355.4px">Body</div>
<div class="a olt" style="left:1596px;top:379.4px">LeftArm</div>
<div class="a olt" style="left:1596px;top:403.4px">RightArm</div>
<div class="a olt" style="left:1596px;top:427.4px">LeftLeg</div>
<div class="a olt" style="left:1596px;top:451.4px">RightLeg</div>
<div class="a ht" style="left:1596px;top:904px">Variable Placeholders</div>
<div class="a ht" style="left:1596px;top:952px">Keyframe</div>
<svg class="a" style="left:0;top:0" width="1920" height="1032">
<g stroke="#a3a6ac" stroke-width="1.9" fill="none">
<path d="M1852 92.2 H1868 M1852 96.6 H1868"/>
<path d="M1852 220.2 H1868 M1852 224.6 H1868"/>
<path d="M1852 910.2 H1868 M1852 914.6 H1868"/>
<path d="M1852 958.2 H1868 M1852 962.6 H1868"/>
</g>
<g stroke="#a3a6ac" stroke-width="2" fill="none">
<path d="M1894 90.5 L1900 96.5 L1906 90.5"/>
<path d="M1894 218.5 L1900 224.5 L1906 218.5"/>
<path d="M1894 915.5 L1900 909.5 L1906 915.5"/>
<path d="M1894 957.5 L1900 963.5 L1906 957.5"/>
</g>
<g fill="#c9cdd4">
<circle cx="1904" cy="168" r="2"/><circle cx="1904" cy="174" r="2"/><circle cx="1904" cy="180" r="2"/>
<circle cx="1904" cy="265" r="1.9"/><circle cx="1904" cy="270" r="1.9"/><circle cx="1904" cy="275" r="1.9"/>
<circle cx="1904" cy="1003" r="1.9"/><circle cx="1904" cy="1008" r="1.9"/><circle cx="1904" cy="1013" r="1.9"/>
</g>
<!-- outliner toolbar icon -->
<rect x="1598.7" y="260.9" width="18.8" height="19" fill="#ffffff"/>
<rect x="1598.5" y="269.6" width="18.8" height="1.4" fill="#2b2d31"/>
<circle cx="1603" cy="265.5" r="1.1" fill="#2b2d31"/><circle cx="1603" cy="275.3" r="1.1" fill="#2b2d31"/>
<!-- search -->
<circle cx="1819" cy="267.5" r="5.8" fill="none" stroke="#c4c7cc" stroke-width="2"/>
<path d="M1823.2 271.8 L1829.8 278.6" stroke="#c4c7cc" stroke-width="2.4"/>
<!-- tree chevrons -->
<path d="M1585 312.5 L1588 315.5 L1591 312.5" fill="none" stroke="#b5bac1" stroke-width="1.3"/>
<path d="M1586.3 335 L1589.5 338 L1586.3 341" fill="none" stroke="#b5bac1" stroke-width="1.3"/>
<path d="M1586.3 359 L1589.5 362 L1586.3 365" fill="none" stroke="#b5bac1" stroke-width="1.3"/>
<rect x="1868.7" y="312.4" width="11.7" height="8.4" rx="1.2" fill="#9a9da5"/>
<path d="M1876.8 312.6 V310.8 A3.1 3.1 0 0 1 1883 310.8 V312.3" fill="none" stroke="#aeb1b8" stroke-width="1.6"/>
<ellipse cx="1896.2" cy="314" rx="7.6" ry="5.9" fill="#e8e9eb"/>
<circle cx="1896.2" cy="314.1" r="3.5" fill="#111214"/>
<circle cx="1896.4" cy="314.3" r="2.2" fill="#e8e9eb"/>
<path d="M1894.2 312.8 L1896.2 314.1 L1896.2 311.9" fill="#111214"/>
<rect x="1868.7" y="336.4" width="11.7" height="8.4" rx="1.2" fill="#9a9da5"/>
<path d="M1876.8 336.6 V334.8 A3.1 3.1 0 0 1 1883 334.8 V336.3" fill="none" stroke="#aeb1b8" stroke-width="1.6"/>
<ellipse cx="1896.2" cy="338" rx="7.6" ry="5.9" fill="#e8e9eb"/>
<circle cx="1896.2" cy="338.1" r="3.5" fill="#111214"/>
<circle cx="1896.4" cy="338.3" r="2.2" fill="#e8e9eb"/>
<path d="M1894.2 336.8 L1896.2 338.1 L1896.2 335.9" fill="#111214"/>
<rect x="1868.7" y="360.4" width="11.7" height="8.4" rx="1.2" fill="#9a9da5"/>
<path d="M1876.8 360.6 V358.8 A3.1 3.1 0 0 1 1883 358.8 V360.3" fill="none" stroke="#aeb1b8" stroke-width="1.6"/>
<ellipse cx="1896.2" cy="362" rx="7.6" ry="5.9" fill="#e8e9eb"/>
<circle cx="1896.2" cy="362.1" r="3.5" fill="#111214"/>
<circle cx="1896.4" cy="362.3" r="2.2" fill="#e8e9eb"/>
<path d="M1894.2 360.8 L1896.2 362.1 L1896.2 359.9" fill="#111214"/>
<rect x="1868.7" y="384.4" width="11.7" height="8.4" rx="1.2" fill="#9a9da5"/>
<path d="M1876.8 384.6 V382.8 A3.1 3.1 0 0 1 1883 382.8 V384.3" fill="none" stroke="#aeb1b8" stroke-width="1.6"/>
<ellipse cx="1896.2" cy="386" rx="7.6" ry="5.9" fill="#e8e9eb"/>
<circle cx="1896.2" cy="386.1" r="3.5" fill="#111214"/>
<circle cx="1896.4" cy="386.3" r="2.2" fill="#e8e9eb"/>
<path d="M1894.2 384.8 L1896.2 386.1 L1896.2 383.9" fill="#111214"/>
<rect x="1868.7" y="408.4" width="11.7" height="8.4" rx="1.2" fill="#9a9da5"/>
<path d="M1876.8 408.6 V406.8 A3.1 3.1 0 0 1 1883 406.8 V408.3" fill="none" stroke="#aeb1b8" stroke-width="1.6"/>
<ellipse cx="1896.2" cy="410" rx="7.6" ry="5.9" fill="#e8e9eb"/>
<circle cx="1896.2" cy="410.1" r="3.5" fill="#111214"/>
<circle cx="1896.4" cy="410.3" r="2.2" fill="#e8e9eb"/>
<path d="M1894.2 408.8 L1896.2 410.1 L1896.2 407.9" fill="#111214"/>
<rect x="1868.7" y="432.4" width="11.7" height="8.4" rx="1.2" fill="#9a9da5"/>
<path d="M1876.8 432.6 V430.8 A3.1 3.1 0 0 1 1883 430.8 V432.3" fill="none" stroke="#aeb1b8" stroke-width="1.6"/>
<ellipse cx="1896.2" cy="434" rx="7.6" ry="5.9" fill="#e8e9eb"/>
<circle cx="1896.2" cy="434.1" r="3.5" fill="#111214"/>
<circle cx="1896.4" cy="434.3" r="2.2" fill="#e8e9eb"/>
<path d="M1894.2 432.8 L1896.2 434.1 L1896.2 431.9" fill="#111214"/>
<rect x="1868.7" y="456.4" width="11.7" height="8.4" rx="1.2" fill="#9a9da5"/>
<path d="M1876.8 456.6 V454.8 A3.1 3.1 0 0 1 1883 454.8 V456.3" fill="none" stroke="#aeb1b8" stroke-width="1.6"/>
<ellipse cx="1896.2" cy="458" rx="7.6" ry="5.9" fill="#e8e9eb"/>
<circle cx="1896.2" cy="458.1" r="3.5" fill="#111214"/>
<circle cx="1896.4" cy="458.3" r="2.2" fill="#e8e9eb"/>
<path d="M1894.2 456.8 L1896.2 458.1 L1896.2 455.9" fill="#111214"/>
</svg>
</body></html>
